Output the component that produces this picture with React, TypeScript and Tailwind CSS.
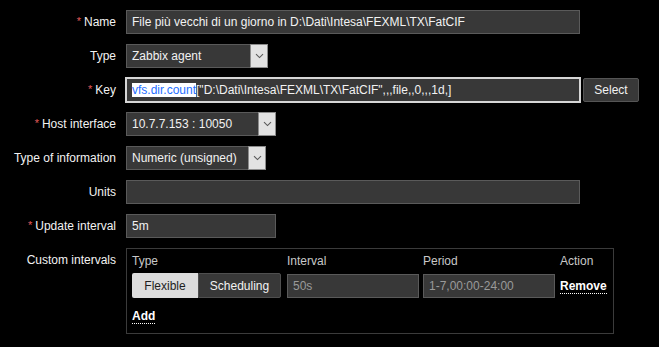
import React from "react";

const Req = () => <span className="text-[#e45959] mr-[3px] text-[11px] relative top-[-1px]">*</span>;

const Label = ({ children, req }: { children: React.ReactNode; req?: boolean }) => (
  <div className="text-right leading-[24px] text-[#f2f2f2] whitespace-nowrap">
    {req && <Req />}
    {children}
  </div>
);

const Chevron = () => (
  <svg width="9" height="6" viewBox="0 0 9 6" fill="none">
    <path d="M1 1.2 L4.5 4.6 L8 1.2" stroke="#5a5a5a" strokeWidth="1.1" />
  </svg>
);

const Select = ({ value, w }: { value: string; w: string }) => (
  <div className={`${w} h-[24px] flex border border-[#5a5a5a] bg-[#383838]`}>
    <div className="flex-1 pl-[5px] leading-[22px] text-[#f2f2f2] whitespace-nowrap overflow-hidden">{value}</div>
    <div className="w-[18px] -my-px -mr-px border border-[#8c8c8c] bg-[#e2e2e2] flex items-center justify-center">
      <Chevron />
    </div>
  </div>
);

const Input = ({ value, w, dim }: { value?: string; w: string; dim?: boolean }) => (
  <div
    className={`${w} h-[24px] border border-[#5a5a5a] bg-[#383838] pl-[5px] leading-[22px] whitespace-nowrap overflow-hidden ${
      dim ? "text-[#9a9a9a]" : "text-[#f2f2f2]"
    }`}
  >
    {value}
  </div>
);

export default function App() {
  return (
    <div
      className="w-[659px] h-[347px] bg-black pt-[10px] text-[12px] overflow-hidden"
      style={{ fontFamily: '"Liberation Sans", Arial, sans-serif' }}
    >
      <div className="grid grid-cols-[116px_auto] gap-x-[10px] gap-y-[10px] items-start">
        <Label req>Name</Label>
        <Input w="w-[454px]" value="File più vecchi di un giorno in D:\Dati\Intesa\FEXML\TX\FatCIF" />

        <Label>Type</Label>
        <Select w="w-[142px]" value="Zabbix agent" />

        <Label req>Key</Label>
        <div className="flex items-center gap-[2px]">
          <div className="w-[456px] h-[26px] -my-px -ml-px border-2 border-[#d6d6d6] bg-[#383838] pl-[5px] leading-[22px] text-[#f2f2f2] whitespace-nowrap overflow-hidden">
            <span className="bg-white text-[#1f6fff]">vfs.dir.count</span>
            {'["D:\\Dati\\Intesa\\FEXML\\TX\\FatCIF",,,file,,0,,,1d,]'}
          </div>
          <div className="w-[56px] h-[24px] border border-[#555] rounded-[2px] bg-[#383838] text-[#f2f2f2] text-center leading-[22px]">
            Select
          </div>
        </div>

        <Label req>Host interface</Label>
        <Select w="w-[150px]" value="10.7.7.153 : 10050" />

        <Label>Type of information</Label>
        <Select w="w-[140px]" value="Numeric (unsigned)" />

        <Label>Units</Label>
        <Input w="w-[454px]" />

        <Label req>Update interval</Label>
        <Input w="w-[150px]" value="5m" />

        <Label>Custom intervals</Label>
        <div className="w-[488px] border border-[#3b3b3b] px-[5px] pt-[5px] pb-[10px]">
          <div className="grid grid-cols-[149px_132px_132px_46px] gap-x-[5px] text-[#c8c8c8] leading-[14px] mb-[6px]">
            <div className="w-[155px]">Type</div>
            <div className="ml-[1px]">Interval</div>
            <div>Period</div>
            <div>Action</div>
          </div>
          <div className="grid grid-cols-[149px_132px_132px_46px] gap-x-[5px] items-center">
            <div className="flex h-[25px] -mt-px w-[149px]">
              <div className="w-[66px] bg-[#dcdcdc] text-[#1e1e1e] rounded-l-[2px] flex items-center justify-center">
                Flexible
              </div>
              <div className="flex-1 bg-[#383838] border border-[#4f4f4f] text-[#f2f2f2] rounded-r-[2px] flex items-center justify-center">
                Scheduling
              </div>
            </div>
            <div className="ml-[1px]">
              <Input w="w-[132px]" value="50s" dim />
            </div>
            <Input w="w-[132px]" value="1-7,00:00-24:00" dim />
            <div className="font-bold text-white leading-[14px]">
              <span className="border-b border-dotted border-white">Remove</span>
            </div>
          </div>
          <div className="mt-[11px] font-bold text-white leading-[14px]">
            <span className="border-b border-dotted border-white">Add</span>
          </div>
        </div>
      </div>
    </div>
  );
}
